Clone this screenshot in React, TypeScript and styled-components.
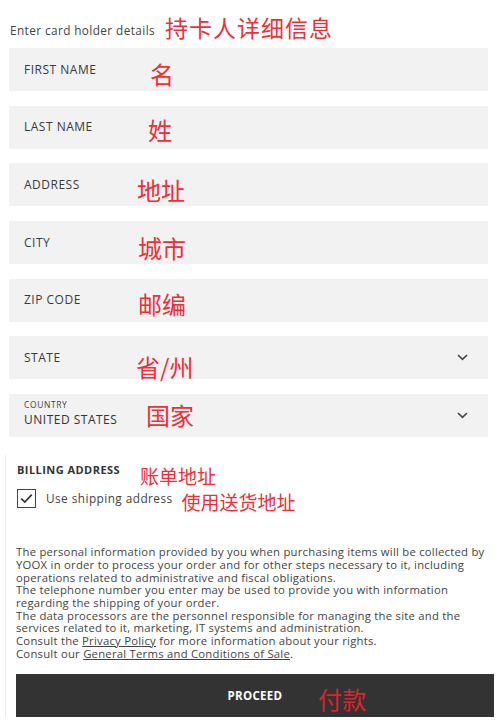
import React from "react";
import styled, { createGlobalStyle } from "styled-components";

const GlobalStyle = createGlobalStyle`
  html, body {
    margin: 0;
    padding: 0;
    background: #ffffff;
  }
  body {
    font-family: "Open Sans", "Liberation Sans", sans-serif;
    color: #3a3a3a;
  }
`;

const fields = [
  { label: "FIRST NAME", note: "名", at: 141, dy: 4 },
  { label: "LAST NAME", note: "姓", at: 139, dy: 3 },
  { label: "ADDRESS", note: "地址", at: 128, dy: 5 },
  { label: "CITY", note: "城市", at: 129, dy: 5 },
  { label: "ZIP CODE", note: "邮编", at: 129, dy: 4 },
];

const privacyLines = [
  "The personal information provided by you when purchasing items will be collected by",
  "YOOX in order to process your order and for other steps necessary to it, including",
  "operations related to administrative and fiscal obligations.",
  "The telephone number you enter may be used to provide you with information",
  "regarding the shipping of your order.",
  "The data processors are the personnel responsible for managing the site and the",
  "services related to it, marketing, IT systems and administration.",
];

export default function App() {
  return (
    <>
      <GlobalStyle />
      <Page>
        <Header>
          <HeaderText>Enter card holder details</HeaderText>
          <HeaderNote>持卡人详细信息</HeaderNote>
        </Header>

        <FieldList>
          {fields.map((f) => (
            <Field key={f.label}>
              <Label>{f.label}</Label>
              <Note $left={f.at} $dy={f.dy}>
                {f.note}
              </Note>
            </Field>
          ))}
          <Field>
            <Label>STATE</Label>
            <Note $left={127} $dy={9}>
              省/州
            </Note>
            <Chevron />
          </Field>
          <Field $stacked>
            <SmallLabel>COUNTRY</SmallLabel>
            <Value>UNITED STATES</Value>
            <Note $left={137} $dy={-1}>
              国家
            </Note>
            <Chevron />
          </Field>
        </FieldList>

        <Billing>
          <BillingTitle>
            BILLING ADDRESS
            <InlineNote $gap={20} $dy={6}>
              账单地址
            </InlineNote>
          </BillingTitle>
          <CheckRow>
            <CheckBox>
              <svg width="13" height="11" viewBox="0 0 13 11">
                <path d="M1.2 5.6 L4.8 9 L11.8 1.6" fill="none" stroke="#333" strokeWidth="1.7" />
              </svg>
            </CheckBox>
            <CheckLabel>Use shipping address</CheckLabel>
            <InlineNote $gap={9} $dy={3}>
              使用送货地址
            </InlineNote>
          </CheckRow>

          <Privacy>
            {privacyLines.map((l) => (
              <Line key={l}>{l}</Line>
            ))}
            <Line>
              Consult the <Link>Privacy Policy</Link> for more information about your rights.
            </Line>
            <Line>
              Consult our <Link>General Terms and Conditions of Sale</Link>.
            </Line>
          </Privacy>

          <Proceed>
            <span>PROCEED</span>
            <ButtonNote>付款</ButtonNote>
          </Proceed>
        </Billing>
      </Page>
    </>
  );
}

function Chevron() {
  return (
    <ChevronIcon width="11" height="7" viewBox="0 0 11 7">
      <path d="M1 1 L5.5 5.3 L10 1" fill="none" stroke="#444" strokeWidth="1.6" />
    </ChevronIcon>
  );
}

const Page = styled.div`
  width: 500px;
  height: 722px;
  overflow: hidden;
  box-sizing: border-box;
`;

const Header = styled.div`
  display: flex;
  align-items: center;
  height: 36px;
  margin-top: 12px;
  padding-left: 10px;
`;

const HeaderText = styled.span`
  font-size: 11.8px;
  letter-spacing: 0.4px;
  color: #444;
`;

const red = "#ec2f38";
const cjk = `"Noto Sans CJK SC", "Noto Sans", sans-serif`;

const HeaderNote = styled.span`
  font-family: ${cjk};
  font-size: 23px;
  line-height: 1;
  color: ${red};
  margin-left: 10px;
  letter-spacing: 1px;
  position: relative;
  top: -3px;
`;

const FieldList = styled.div`
  display: flex;
  flex-direction: column;
  gap: 14.7px;
  margin-left: 9px;
  width: 479px;
`;

const Field = styled.div<{ $stacked?: boolean }>`
  position: relative;
  height: 43px;
  box-sizing: border-box;
  background: #f2f2f2;
  padding: ${({ $stacked }) => ($stacked ? "5px 15px 0" : "0 15px")};
  display: flex;
  flex-direction: column;
  justify-content: ${({ $stacked }) => ($stacked ? "flex-start" : "center")};
`;

const Label = styled.span`
  font-size: 12px;
  letter-spacing: 0.5px;
  color: #3a3a3a;
  margin-top: -1px;
`;

const SmallLabel = styled.span`
  font-size: 8.5px;
  letter-spacing: 0.6px;
  line-height: 11px;
  color: #444;
`;

const Value = styled.span`
  font-size: 12px;
  letter-spacing: 0.5px;
  line-height: 18px;
  margin-top: 1px;
  color: #333;
`;

const Note = styled.span<{ $left: number; $dy: number }>`
  position: absolute;
  left: ${({ $left }) => $left}px;
  top: 50%;
  transform: translateY(calc(-50% + ${({ $dy }) => $dy}px));
  font-family: ${cjk};
  font-size: 24px;
  line-height: 1;
  color: ${red};
`;

const ChevronIcon = styled.svg`
  position: absolute;
  right: 20px;
  top: 50%;
  margin-top: -4px;
`;

const Billing = styled.div`
  margin-top: 18px;
  margin-left: 5px;
  padding-left: 10px;
  border-left: 1px solid #ececec;
  width: 478px;
`;

const BillingTitle = styled.div`
  display: flex;
  align-items: center;
  height: 28px;
  font-size: 11px;
  letter-spacing: 0.45px;
  font-weight: 700;
  color: #333;
  padding-left: 1px;
`;

const InlineNote = styled.span<{ $gap: number; $dy: number }>`
  font-family: ${cjk};
  font-weight: 400;
  font-size: 19px;
  letter-spacing: 0;
  line-height: 1;
  color: ${red};
  margin-left: ${({ $gap }) => $gap}px;
  position: relative;
  top: ${({ $dy }) => $dy}px;
`;

const CheckRow = styled.div`
  display: flex;
  align-items: center;
  height: 24px;
  margin-top: 3px;
  padding-left: 1px;
`;

const CheckBox = styled.span`
  width: 19px;
  height: 19px;
  box-sizing: border-box;
  border: 1.3px solid #444;
  display: flex;
  align-items: center;
  justify-content: center;
`;

const CheckLabel = styled.span`
  margin-left: 10px;
  font-size: 11.8px;
  letter-spacing: 0.45px;
  color: #444;
`;

const Privacy = styled.div`
  margin-top: 36px;
  font-size: 11.3px;
  letter-spacing: 0.24px;
  line-height: 12.7px;
  color: #444;
`;

const Line = styled.span`
  display: block;
  white-space: nowrap;
`;

const Link = styled.span`
  text-decoration: underline;
`;

const Proceed = styled.div`
  position: relative;
  margin-top: 14px;
  height: 43px;
  background: #333333;
  display: flex;
  align-items: center;
  justify-content: center;
  color: #fff;
  font-size: 11.5px;
  letter-spacing: 0.3px;
  font-weight: 700;
`;

const ButtonNote = styled.span`
  position: absolute;
  left: 302px;
  top: 50%;
  transform: translateY(calc(-50% + 3px));
  font-family: ${cjk};
  font-weight: 400;
  font-size: 24px;
  line-height: 1;
  color: #d8262c;
`;
